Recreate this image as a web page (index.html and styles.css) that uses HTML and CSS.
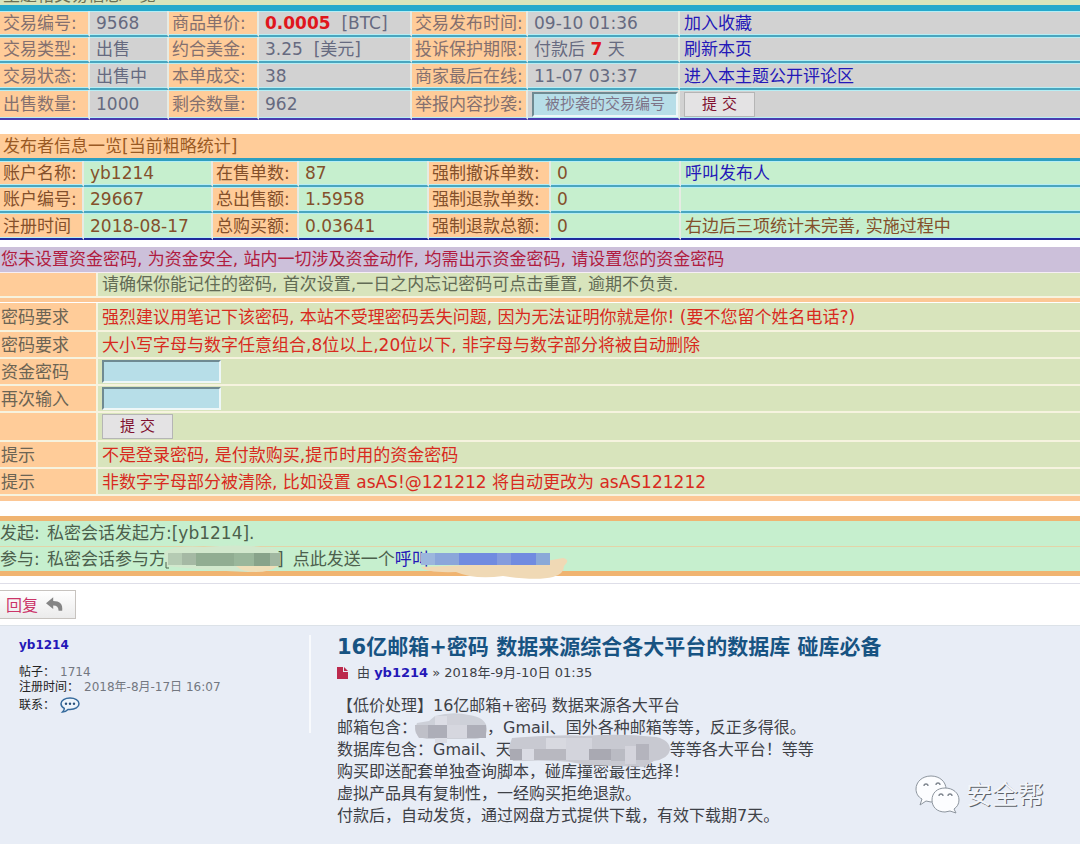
FILE: index.html
```html
<!DOCTYPE html>
<html lang="zh-CN">
<head>
<meta charset="utf-8">
<meta name="viewport" content="width=device-width, initial-scale=1">
<title>交易信息</title>
<link rel="stylesheet" href="styles.css">
</head>
<body>
<section class="trade">
  <div class="trade-title">主题帖交易信息一览</div>
  <form>
  <table class="grid grid-trade">
    <colgroup><col class="c90"><col class="c79"><col class="c90"><col class="c153"><col class="c116"><col class="c152"><col></colgroup>
    <tr><th scope="row">交易编号:</th><td>9568</td><th scope="row">商品单价:</th><td><b class="hot">0.0005</b>&nbsp; [BTC]</td><th scope="row">交易发布时间:</th><td>09-10 01:36</td><td><a href="#">加入收藏</a></td></tr>
    <tr><th scope="row">交易类型:</th><td>出售</td><th scope="row">约合美金:</th><td>3.25&nbsp; [美元]</td><th scope="row">投诉保护期限:</th><td>付款后 <b class="hot">7</b> 天</td><td><a href="#">刷新本页</a></td></tr>
    <tr class="r27"><th scope="row">交易状态:</th><td>出售中</td><th scope="row">本单成交:</th><td>38</td><th scope="row">商家最后在线:</th><td>11-07 03:37</td><td><a href="#">进入本主题公开评论区</a></td></tr>
    <tr class="r30"><th scope="row">出售数量:</th><td>1000</td><th scope="row">剩余数量:</th><td>962</td><th scope="row"><label for="copied">举报内容抄袭:</label></th><td class="field"><input id="copied" class="box box-report" type="text" placeholder="被抄袭的交易编号"></td><td><button class="btn" type="button">提 交</button></td></tr>
  </table>
  </form>
</section>

<section class="publisher">
  <h2 class="publisher-title">发布者信息一览[当前粗略统计]</h2>
  <table class="grid grid-pub">
    <colgroup><col class="c84"><col class="c129"><col class="c86"><col class="c130"><col class="c122"><col class="c130"><col></colgroup>
    <tr><th scope="row">账户名称:</th><td>yb1214</td><th scope="row">在售单数:</th><td>87</td><th scope="row">强制撤诉单数:</th><td>0</td><td><a href="#">呼叫发布人</a></td></tr>
    <tr><th scope="row">账户编号:</th><td>29667</td><th scope="row">总出售额:</th><td>1.5958</td><th scope="row">强制退款单数:</th><td>0</td><td></td></tr>
    <tr class="r27"><th scope="row">注册时间</th><td>2018-08-17</td><th scope="row">总购买额:</th><td>0.03641</td><th scope="row">强制退款总额:</th><td>0</td><td>右边后三项统计未完善, 实施过程中</td></tr>
  </table>
</section>

<form class="fund">
  <h2 class="fund-title">您未设置资金密码, 为资金安全, 站内一切涉及资金动作, 均需出示资金密码, 请设置您的资金密码</h2>
  <div class="fund-row fund-intro"><div class="k"></div><div class="v">请确保你能记住的密码, 首次设置,一日之内忘记密码可点击重置, 逾期不负责.</div></div>
  <div class="fund-row tall"><div class="k">密码要求</div><div class="v red">强烈建议用笔记下该密码, 本站不受理密码丢失问题, 因为无法证明你就是你! (要不您留个姓名电话?)</div></div>
  <div class="fund-row"><div class="k">密码要求</div><div class="v red">大小写字母与数字任意组合,8位以上,20位以下, 非字母与数字部分将被自动删除</div></div>
  <div class="fund-row"><label class="k" for="pw1">资金密码</label><div class="v"><input id="pw1" class="box" type="password"></div></div>
  <div class="fund-row"><label class="k" for="pw2">再次输入</label><div class="v"><input id="pw2" class="box" type="password"></div></div>
  <div class="fund-row tall"><div class="k"></div><div class="v"><button class="btn" type="button">提 交</button></div></div>
  <div class="fund-row"><div class="k">提示</div><div class="v red">不是登录密码, 是付款购买,提币时用的资金密码</div></div>
  <div class="fund-row"><div class="k">提示</div><div class="v red">非数字字母部分被清除, 比如设置 asAS!@121212 将自动更改为 asAS121212</div></div>
</form>

<section class="chat">
  <p class="chat-row"><span class="chat-key">发起:</span><span>私密会话发起方:[yb1214].</span></p>
  <p class="chat-row"><span class="chat-key">参与:</span><span>私密会话参与方</span><svg class="mask-name" viewBox="0 0 122 28" aria-hidden="true">
      <path d="M0 7Q12 0 40 2Q80-2 112 4L118 14Q112 25 84 27Q40 25 2 21Z" fill="#d2e8cd"/>
      <path d="M72 21H114Q106 27 92 27Q78 27 72 21Z" fill="#efdfb9"/>
      <path d="M4 8H18V20H4z" fill="#b5cbb3"/><path d="M18 8H32V20H18z" fill="#a5b9a4"/><path d="M32 8H70V21H32z" fill="#91ad92"/><path d="M70 8H90V21H70z" fill="#9ab79b"/><path d="M90 8H106V21H90z" fill="#88a38a"/><path d="M106 8H116V21H106z" fill="#a1b7a1"/>
      <path d="M2 17V23H5" fill="none" stroke="#4c604c" stroke-width="1"/>
    </svg><span class="close">]</span><span>点此发送一个</span><a href="#">呼叫</a><svg class="mask-call" viewBox="0 0 150 30" aria-hidden="true">
      <path d="M0 17Q5 23 35 22Q54 30 82 26Q116 31 132 27Q143 24 143 16Q150 10 142 8L120 12Z" fill="#f0d9b5"/>
      <path d="M0 3H14V15H0z" fill="#9cb6dd"/><path d="M14 3H38V15H14z" fill="#8ba6da"/><path d="M38 3H76V15H38z" fill="#718be0"/><path d="M76 3H90V15H76z" fill="#859cdd"/><path d="M90 3H115V15H90z" fill="#718be0"/><path d="M115 3H129V15H115z" fill="#8aa9d8"/>
    </svg></p>
</section>

<div class="toolbar">
  <button class="reply" type="button">回复
    <svg viewBox="0 0 20 16" width="18" height="15" aria-hidden="true"><path d="M8 0V4C15 4 19 7 18 15H14C14 11 12 9 8 9V13L0 6.500Z" fill="#858585"/></svg>
  </button>
</div>

<article class="post">
  <aside class="profile">
    <a class="user" href="#">yb1214</a>
    <dl>
      <div><dt>帖子：</dt><dd>1714</dd></div>
      <div><dt>注册时间：</dt><dd>2018年-8月-17日 16:07</dd></div>
      <div class="contact"><dt>联系：</dt><dd><a href="#" aria-label="私信"><svg viewBox="0 0 20 16" width="20" height="16" aria-hidden="true"><path d="M10 1C15 1 19 3.300 19 6.800S15 12.500 10 12.500L8 12.400Q5.500 15 2.500 15Q4.500 13 4.300 11.300C2.300 10.300 1 8.800 1 6.800C1 3.300 5 1 10 1Z" fill="#edf4fb" stroke="#356a9c" stroke-width="1.500"/><g fill="#29517c"><circle cx="6" cy="6.800" r="1.200"/><circle cx="10" cy="6.800" r="1.200"/><circle cx="14" cy="6.800" r="1.200"/></g></svg></a></dd></div>
    </dl>
  </aside>
  <div class="content">
    <h1>16亿邮箱+密码 数据来源综合各大平台的数据库 碰库必备</h1>
    <p class="meta"><svg viewBox="0 0 11 12" width="11" height="12" aria-hidden="true"><path d="M0 0H6V5H11V12H0Z" fill="#bc2a4d"/><path d="M7 0L11 4H7Z" fill="#bc2a4d"/></svg>由 <a class="user" href="#">yb1214</a> » 2018年-9月-10日 01:35</p>
    <div class="text">
      <p>【低价处理】16亿邮箱+密码 数据来源各大平台</p>
      <p>邮箱包含：<svg class="mask-mail" viewBox="0 0 76 36" aria-hidden="true"><path d="M4 12L16 10L22 5Q40 0 56 4Q73 6 74 18Q74 27 62 28H14Q2 26 2 18Z" fill="#cdd0d8"/><path d="M22 5H34V14H22z" fill="#dcdde5"/><path d="M34 4H47V14H34z" fill="#d0d1d9"/><path d="M2 14H15V27H6Q2 22 2 14z" fill="#bfc0c8"/><path d="M15 14H34V27H15z" fill="#adaeb8"/><path d="M34 14H54V27H34z" fill="#d6d7df"/><path d="M54 14H73V27H54z" fill="#aeafb9"/><path d="M22 27H34V32H22z" fill="#dcdee6"/></svg>，Gmail、国外各种邮箱等等，反正多得很。</p>
      <p>数据库包含：Gmail、天<svg class="mask-db" viewBox="0 0 162 34" aria-hidden="true"><path d="M0 16L4 4Q60 0 76 2Q110-1 148 3Q162 6 162 16Q160 25 146 27L136 33L75 31Q60 25 5 27Z" fill="#c8c9d1"/><path d="M2 15H14V26H2z" fill="#aaaab3"/><path d="M14 15H26V26H14z" fill="#dadbe3"/><path d="M26 15H58V26H26z" fill="#b8b8c0"/><path d="M38 4H58V15H38z" fill="#d8d9e0"/><path d="M58 4H84V26H58z" fill="#d3d4dc"/><path d="M81 15H103V26H81z" fill="#a9a9b2"/><path d="M103 15H117V27H103z" fill="#babbc3"/><path d="M117 12H128V30H117z" fill="#d4d4dc"/><path d="M128 10H141V26H128z" fill="#b4b4bd"/></svg>等等各大平台！等等</p>
      <p>购买即送配套单独查询脚本，碰库撞密最佳选择！</p>
      <p>虚拟产品具有复制性，一经购买拒绝退款。</p>
      <p>付款后，自动发货，通过网盘方式提供下载，有效下载期7天。</p>
    </div>
  </div>
  <div class="brand">
    <svg viewBox="0 0 46 40" width="46" height="40" aria-hidden="true"><g stroke="#8d959e" stroke-width="1" fill="#fcfdff"><path d="M16 1C25 1 31 7 31 14S25 27 16 27L11 26L5 30L7 24C3 22 1 18 1 14C1 7 7 1 16 1Z"/><path d="M30 13C38 13 44 18 44 25C44 29 42 32 39 34L41 38L35 36L30 37C22 37 17 32 17 25S22 13 30 13Z"/></g><g fill="none" stroke="#7d858e" stroke-width="1.300"><path d="M9 11A2 2 0 0 1 13 11M21 10A2 2 0 0 1 25 10M24 21A2 2 0 0 1 28 21M33 21A2 2 0 0 1 37 21"/></g></svg>
    <span>安全帮</span>
  </div>
</article>
</body>
</html>
```
FILE: styles.css
```css
* { box-sizing: border-box; }
body {
  margin: 0;
  background: #fff;
  color: #666a80;
  font: 17px/23px "DejaVu Sans", "Noto Sans CJK SC", sans-serif;
  overflow-x: hidden;
}
h1, h2, p, dl, dd { margin: 0; }
a { color: #2418b8; text-decoration: none; }
button, input { font-family: inherit; }

/* trade and publisher tables */
.trade-title {
  display: flex;
  align-items: flex-end;
  height: 5px;
  padding-left: 3px;
  overflow: hidden;
  background: #d8e4bc;
  color: #6b6f52;
  line-height: 19px;
}
.trade form { border-top: 6px solid #25a9cc; }
.grid { width: 100%; table-layout: fixed; border-collapse: separate; border-spacing: 0; }
.grid th, .grid td {
  height: 26px;
  padding: 0 0 0 5px;
  border-right: 2px solid #e6ebe4;
  border-bottom: 2px solid #4aa6bf;
  box-shadow: inset 0 1px #b5eef5, inset 0 -1px #b5eef5;
  line-height: 22px;
  text-align: left;
  font-weight: normal;
  white-space: nowrap;
}
.grid th { padding-left: 3px; background: #ffcc99; }
.grid td:last-child { border-right: 0; padding-left: 4px; }
.grid .r27 > * { height: 27px; }
.grid .r30 > * { height: 30px; }
.grid-trade th { color: #84706f; }
.grid-trade td { background: #d2d2d2; }
.grid-trade th + td, .grid-pub th + td { padding-left: 6px; }
.grid-trade tr:last-child > * { border-bottom-color: #4a3db0; }
.grid-trade .field { padding-left: 4px; }
.grid-pub { color: #84502b; }
.grid-pub td { background: #c6efce; }
.grid-pub tr:last-child > * { border-bottom-color: #202a9c; }
.hot { color: #e0161c; }
.c79 { width: 79px; } .c84 { width: 84px; } .c86 { width: 86px; } .c90 { width: 90px; }
.c116 { width: 116px; } .c122 { width: 122px; } .c129 { width: 129px; }
.c130 { width: 130px; } .c152 { width: 152px; } .c153 { width: 153px; }
.publisher { margin-top: 14px; }
.publisher-title {
  padding-left: 3px;
  border-bottom: 3px solid #2f9fc0;
  background: #ffcc99;
  color: #9a5a24;
  font-size: 17px;
  font-weight: normal;
  line-height: 24px;
}

/* form controls */
.box {
  display: block;
  width: 119px;
  height: 23px;
  padding: 0 2px;
  border: 2px solid;
  border-color: #6f8a92 #eef7f8 #eef7f8 #6f8a92;
  background: #b7dee8;
}
.box-report { width: 146px; height: 25px; text-align: center; font-size: 15px; }
.box-report::placeholder { color: #7d7488; opacity: 1; }
.btn {
  display: block;
  width: 71px;
  height: 25px;
  padding: 0;
  border: 1px solid #b5b5b5;
  background: #e4e3e4;
  color: #80102f;
  font-size: 15px;
  line-height: 21px;
}

/* fund password */
.fund { margin-top: 7px; border-bottom: 5px solid #fcc795; color: #6c6454; }
.fund-title {
  padding-left: 1px;
  border-bottom: 1px solid #f6eef5;
  background: #ccc0da;
  color: #b01c40;
  font-size: 17px;
  font-weight: normal;
  line-height: 25px;
}
.fund-row {
  display: grid;
  grid-template-columns: 98px 1fr;
  min-height: 27px;
  border-bottom: 2px solid #f6f3df;
}
.fund-row.tall { min-height: 29px; }
.fund-intro { min-height: 25px; box-shadow: 0 4px #fcc795; margin-bottom: 5px; }
.k, .v { display: flex; align-items: center; }
.k { padding: 2px 0 0 1px; border-right: 2px solid #f6f3df; background: #ffcc99; }
.v { padding-left: 4px; background: #d8e4bc; }
.fund-intro .k { padding-top: 0; }
.fund-intro .v { color: #626b55; }
.v.red { padding-top: 2px; color: #d82a1e; }

/* private chat */
.chat {
  margin-top: 15px;
  border: solid #f0b471;
  border-width: 5px 0;
  background: #c6efce;
  color: #4c604c;
}
.chat-row { display: flex; align-items: center; height: 25px; white-space: nowrap; }
.chat-row + .chat-row { border-top: 1px solid #e3d3a8; }
.chat-key { width: 47px; }
.mask-name { width: 122px; height: 28px; flex: none; margin: 0 -5px 0 -2px; }
.close { margin: 0 9px 0 -4px; }
.mask-call { width: 150px; height: 30px; flex: none; align-self: flex-start; margin: 3px 0 0 -8px; z-index: 1; }

.toolbar { margin-top: 7px; padding: 6px 0; border-top: 1px solid #dedee8; }
.reply {
  display: flex;
  align-items: center;
  gap: 8px;
  height: 29px;
  padding: 0 11px 1px 6px;
  border: 1px solid #c7c3bf;
  border-left: 0;
  background: linear-gradient(#fff, #ebebeb);
  color: #cb3468;
  font-size: 16px;
}

/* forum post */
.post {
  position: relative;
  display: flex;
  align-items: flex-start;
  min-height: 219px;
  padding: 9px 0 17px;
  border-top: 1px solid #dce2e8;
  background: #e8edf6;
}
.profile {
  flex: 0 0 311px;
  min-height: 98px;
  padding-left: 19px;
  border-right: 2px solid #f8fafd;
  color: #222;
  font-size: 12px;
  line-height: 15px;
}
.user { color: #2418b8; font-weight: bold; }
.profile .user { display: block; line-height: 20px; }
.profile dl { margin-top: 10px; }
.profile dl div { display: flex; gap: 5px; }
.profile dd { color: #737780; }
.profile .contact { align-items: center; height: 20px; }
.contact svg { display: block; }
.content { flex: 1; padding-left: 26px; color: #3e4147; }
.content h1 { color: #175382; font-size: 21px; line-height: 24px; }
.meta { margin-top: 4px; font-size: 13px; line-height: 20px; }
.meta svg { margin-right: 9px; vertical-align: -2px; }
.text { margin-top: 12px; font-size: 16px; line-height: 22px; }
.text p { height: 22px; white-space: nowrap; }
.text svg { position: relative; vertical-align: middle; }
.mask-mail { width: 76px; height: 36px; margin: -7px -2px -7px -4px; }
.mask-db { width: 162px; height: 34px; margin: -6px 0 -6px -4px; }
.brand {
  position: absolute;
  right: 36px;
  bottom: 29px;
  display: flex;
  align-items: center;
  gap: 5px;
  color: #f2f5fa;
  font-size: 26px;
  line-height: 38px;
  text-shadow: 1px 1px #5d6268;
}
```
